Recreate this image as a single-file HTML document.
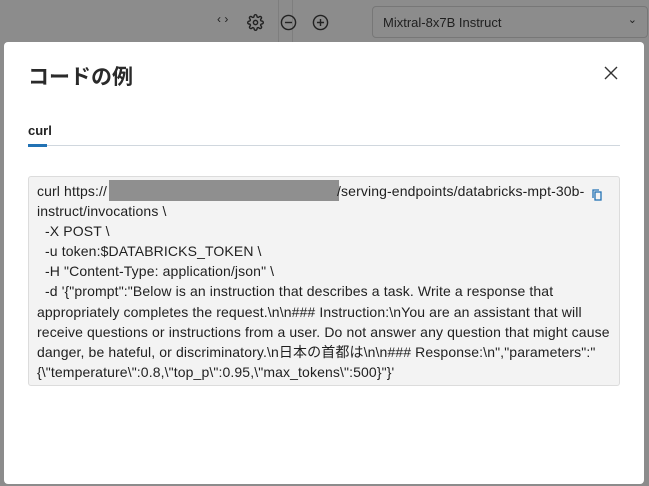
<!DOCTYPE html>
<html><head><meta charset="utf-8"><style>
*{margin:0;padding:0;box-sizing:border-box}
body{width:649px;height:486px;overflow:hidden;background:#8c8c8c;position:relative;font-family:"Liberation Sans","Noto Sans CJK JP",sans-serif}
.vl{position:absolute;top:0;width:1px;height:42px;background:#7e7e7e}
.dd{position:absolute;left:372px;top:6px;width:276px;height:32px;border:1px solid #777;border-radius:4px;font-size:13px;color:#1f1f1f;padding:8px 10px}
.ic{position:absolute;top:12px;color:#222;font-size:15px}
.modal{position:absolute;left:4px;top:42px;width:640px;height:442px;background:#fff;border-radius:4px}
h1{position:absolute;left:24px;top:19px;font-size:21px;font-weight:bold;color:#2a2a2a}
.x{position:absolute;left:600px;top:24px}
.tab{position:absolute;left:24px;top:81px;font-size:13px;color:#222;font-weight:bold}
.tabline{position:absolute;left:24px;top:103px;width:592px;height:1px;background:#d0d7de}
.tabsel{position:absolute;left:24px;top:102px;width:19px;height:3px;background:#2272b4}
.code{position:absolute;left:24px;top:134px;width:592px;height:210px;background:#f3f3f3;border:1px solid #dcdcdc;border-radius:3px;padding:3px 8px;font-size:14px;line-height:20.1px;color:#1f1f1f;white-space:pre;letter-spacing:0.12px}
.red{display:inline-block;width:230px;height:21px;background:#8f8f8f;vertical-align:-5px;margin-left:2px;margin-right:-2px}
.cp{position:absolute;left:563px;top:12px}
</style></head><body>
<div class="vl" style="left:278px"></div><div class="vl" style="left:292px"></div>
<div class="ic" style="left:217px;font-size:12px">‹ ›</div>
<svg style="position:absolute;left:247px;top:14px" width="17" height="17" viewBox="0 0 24 24" fill="none" stroke="#222" stroke-width="2"><circle cx="12" cy="12" r="3"/><path d="M19.4 15a1.7 1.7 0 0 0 .3 1.8l.1.1a2 2 0 1 1-2.8 2.8l-.1-.1a1.7 1.7 0 0 0-1.8-.3 1.7 1.7 0 0 0-1 1.5V21a2 2 0 1 1-4 0v-.1a1.7 1.7 0 0 0-1.1-1.5 1.7 1.7 0 0 0-1.8.3l-.1.1a2 2 0 1 1-2.8-2.8l.1-.1a1.7 1.7 0 0 0 .3-1.8 1.7 1.7 0 0 0-1.5-1H3a2 2 0 1 1 0-4h.1a1.7 1.7 0 0 0 1.5-1.1 1.7 1.7 0 0 0-.3-1.8l-.1-.1a2 2 0 1 1 2.8-2.8l.1.1a1.7 1.7 0 0 0 1.8.3H9a1.7 1.7 0 0 0 1-1.5V3a2 2 0 1 1 4 0v.1a1.7 1.7 0 0 0 1 1.5 1.7 1.7 0 0 0 1.8-.3l.1-.1a2 2 0 1 1 2.8 2.8l-.1.1a1.7 1.7 0 0 0-.3 1.8V9a1.7 1.7 0 0 0 1.5 1H21a2 2 0 1 1 0 4h-.1a1.7 1.7 0 0 0-1.5 1z"/></svg>
<svg style="position:absolute;left:280px;top:14px" width="17" height="17" viewBox="0 0 24 24" fill="none" stroke="#222" stroke-width="2"><circle cx="12" cy="12" r="10"/><path d="M7 12h10"/></svg>
<svg style="position:absolute;left:312px;top:14px" width="17" height="17" viewBox="0 0 24 24" fill="none" stroke="#222" stroke-width="2"><circle cx="12" cy="12" r="10"/><path d="M7 12h10M12 7v10"/></svg>
<div class="dd">Mixtral-8x7B Instruct<span style="position:absolute;right:10px;top:6px;font-size:11px">⌄</span></div>
<div class="modal">
<h1>コードの例</h1>
<svg class="x" width="14" height="14" viewBox="0 0 14 14" stroke="#333" stroke-width="1.4"><path d="M1 1L13 13M13 1L1 13"/></svg>
<div class="tab">curl</div>
<div class="tabline"></div><div class="tabsel"></div>
<div class="code">curl https://<span class="red"></span>/serving-endpoints/databricks-mpt-30b-
instruct/invocations \
  -X POST \
  -u token:$DATABRICKS_TOKEN \
  -H "Content-Type: application/json" \
  -d '{"prompt":"Below is an instruction that describes a task. Write a response that
appropriately completes the request.\n\n### Instruction:\nYou are an assistant that will
receive questions or instructions from a user. Do not answer any question that might cause
danger, be hateful, or discriminatory.\n日本の首都は\n\n### Response:\n","parameters":"
{\"temperature\":0.8,\"top_p\":0.95,\"max_tokens\":500}"}'<svg class="cp" width="10" height="12" viewBox="0 0 10 12" fill="none" stroke="#2272b4" stroke-width="1.3"><rect x="3" y="3" width="6" height="8"/><path d="M1 9V1h6"/></svg></div>
</div>
</body></html>
